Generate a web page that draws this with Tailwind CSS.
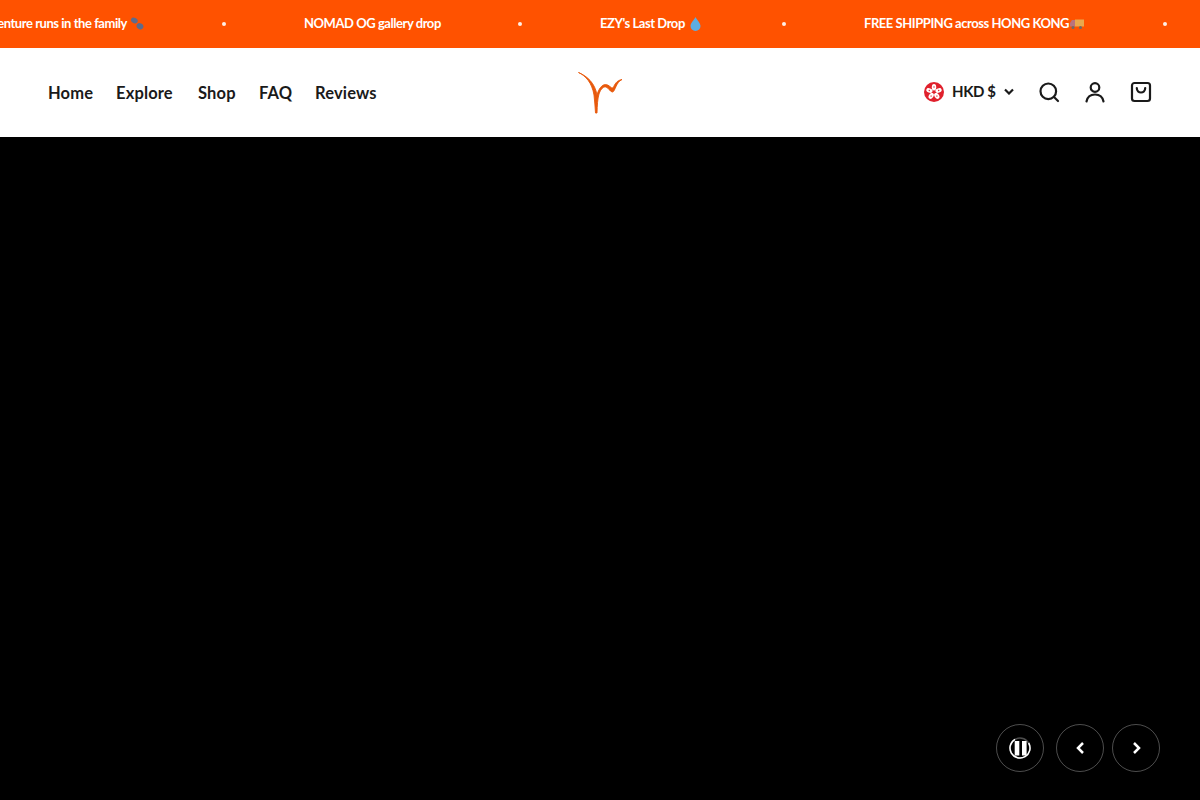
<!DOCTYPE html>
<html lang="en">
<head>
  <meta charset="UTF-8" />
  <meta name="viewport" content="width=device-width, initial-scale=1.0"/>
  <title>Home</title>
  <script src="https://cdn.jsdelivr.net/npm/@tailwindcss/browser@4"></script>
</head>
<body class="bg-black font-['Lato',sans-serif] h-[800px] overflow-hidden flex flex-col">

  <!-- Announcement bar -->
  <div class="bg-[#ff5200] h-12 flex items-center overflow-hidden text-white text-[13px] font-bold tracking-[-0.45px] whitespace-nowrap gap-[78px] pb-[1px]">
    <div class="w-[144px] shrink-0 flex justify-end items-center gap-[3px]">
      <span class="shrink-0">Adventure runs in the family</span>
      <svg class="shrink-0 w-[14px] h-[14px]" viewBox="0 0 16 16" fill="#5f6b8a"><ellipse cx="5" cy="4" rx="4" ry="3" transform="rotate(25 5 4)"/><ellipse cx="11.400" cy="10.600" rx="4" ry="3.400" transform="rotate(25 11.400 10.600)"/></svg>
    </div>
    <span class="w-1 h-1 rounded-full bg-white/90 shrink-0"></span>
    <span class="w-[136px] shrink-0">NOMAD OG gallery drop</span>
    <span class="w-1 h-1 rounded-full bg-white/90 shrink-0"></span>
    <div class="w-[104px] shrink-0 flex items-center gap-[5px]">
      <span>EZY's Last Drop</span>
      <svg class="shrink-0 w-[11px] h-[14px]" viewBox="0 0 11 14" fill="#5dade2"><path d="M5.500 0C7 3 10.500 6 10.500 9a5 5 0 0 1-10 0C.5 6 4 3 5.500 0z"/></svg>
    </div>
    <span class="w-1 h-1 rounded-full bg-white/90 shrink-0"></span>
    <div class="w-[221px] shrink-0 flex items-center gap-[1px]">
      <span>FREE SHIPPING across HONG KONG</span>
      <svg class="shrink-0 w-[14px] h-[12px]" viewBox="0 0 14 12"><rect x="5" y="1.500" width="9" height="7" fill="#e9a84c"/><path d="M0 5l2-3h3v6.500H0z" fill="#b9737d"/><circle cx="3" cy="9.500" r="1.500" fill="#6b6b6b"/><circle cx="10.500" cy="9.500" r="1.500" fill="#6b6b6b"/></svg>
    </div>
    <span class="w-1 h-1 rounded-full bg-white/90 shrink-0"></span>
  </div>

  <!-- Header -->
  <header class="bg-white h-[89px] px-12 pb-[2px] grid grid-cols-[1fr_auto_1fr] items-center text-[#1a1a1a]">
    <nav class="flex items-center gap-6 text-[16.500px] font-bold tracking-[0.15px] whitespace-nowrap pt-[3px]">
      <a href="#" class="w-[44px]">Home</a>
      <a href="#" class="w-[58px]">Explore</a>
      <a href="#" class="w-[37px]">Shop</a>
      <a href="#" class="w-[32px]">FAQ</a>
      <a href="#" class="w-[62px]">Reviews</a>
    </nav>

    <a href="#" class="block mt-[2px]">
      <svg class="w-[46px] h-[44px] block" viewBox="0 0 46 44" fill="#e8590c" stroke="#e8590c" stroke-width=".9">
        <path d="M1.500 1.500C9 5 15 12 17 24c.8 6 1 12 1.500 18H20c.3-8 .5-14 2-19 2-6 5-7.500 7-7 3 1 4 5 6.500 5 2.500 0 3.500-10 9.500-12.500-5.500 1-7 4.500-9 8.500-2 .5-4-3.500-7.500-3.500S21.500 18 20 24C18 12 10 5 1.500 1.500z"/>
      </svg>
    </a>

    <div class="flex items-center justify-end">
      <!-- Hong Kong flag -->
      <svg class="w-5 h-5 mr-2" viewBox="0 0 20 20"><circle cx="10" cy="10" r="10" fill="#e0202c"/><g fill="#fff"><g id="petal"><ellipse cx="10" cy="5.200" rx="2.200" ry="3.200"/><circle cx="10" cy="5" r=".7" fill="#e0202c"/></g><use href="#petal" transform="rotate(72 10 10)"/><use href="#petal" transform="rotate(144 10 10)"/><use href="#petal" transform="rotate(216 10 10)"/><use href="#petal" transform="rotate(288 10 10)"/></g></svg>
      <span class="text-[15px] font-bold tracking-[-0.4px] w-[43px] whitespace-nowrap">HKD $</span>
      <svg class="w-[10px] h-[7px] ml-[9px]" viewBox="0 0 10 7" fill="none" stroke="#1a1a1a" stroke-width="2.200"><path d="M1 1.500l4 4 4-4"/></svg>
      <svg class="w-[22px] h-[22px] ml-[24px]" viewBox="0 0 22 22" fill="none" stroke="#1a1a1a" stroke-width="2.200"><circle cx="10.300" cy="10.300" r="7.800"/><path d="M16 16l4 4" stroke-linecap="round"/></svg>
      <svg class="w-[22px] h-[22px] ml-[24px]" viewBox="0 0 22 22" fill="none" stroke="#1a1a1a" stroke-width="2.200"><circle cx="11" cy="6.500" r="4.300"/><path d="M2.500 20.500c.8-4.500 4-7 8.500-7s7.700 2.500 8.500 7" stroke-linecap="round"/></svg>
      <svg class="w-[22px] h-[22px] ml-[24px]" viewBox="0 0 22 22" fill="none" stroke="#1a1a1a" stroke-width="2.200"><path d="M4.500 2h13A2.500 2.500 0 0 1 20 4.500v13a2.500 2.500 0 0 1-2.500 2.500h-13A2.500 2.500 0 0 1 2 17.500v-13A2.500 2.500 0 0 1 4.500 2z"/><path d="M6.800 7c0 6 8.400 6 8.400 0" stroke-linecap="round"/></svg>
    </div>
  </header>

  <!-- Hero slideshow -->
  <main class="flex-1 bg-black flex items-end justify-end pr-10 pb-7">
    <div class="flex items-center">
      <button class="w-12 h-12 rounded-full border border-white/30 flex items-center justify-center mr-3">
        <svg class="w-[22px] h-[22px]" viewBox="0 0 22 22" fill="none"><circle cx="11" cy="11" r="10" stroke="#fff" stroke-opacity=".3" stroke-width="1.500"/><path d="M19.660 6A10 10 0 1 1 6 2.340" stroke="#fff" stroke-width="1.500"/><rect x="5.700" y="4" width="4.600" height="14.500" fill="#fff"/><rect x="13" y="4" width="4.600" height="14.500" fill="#fff"/></svg>
      </button>
      <button class="w-12 h-12 rounded-full border border-white/30 flex items-center justify-center mr-2">
        <svg class="w-[9px] h-[12px]" viewBox="0 0 9 12" fill="none" stroke="#fff" stroke-width="2.500"><path d="M7 1L2 6l5 5"/></svg>
      </button>
      <button class="w-12 h-12 rounded-full border border-white/30 flex items-center justify-center">
        <svg class="w-[9px] h-[12px]" viewBox="0 0 9 12" fill="none" stroke="#fff" stroke-width="2.500"><path d="M2 1l5 5-5 5"/></svg>
      </button>
    </div>
  </main>

</body>
</html>
